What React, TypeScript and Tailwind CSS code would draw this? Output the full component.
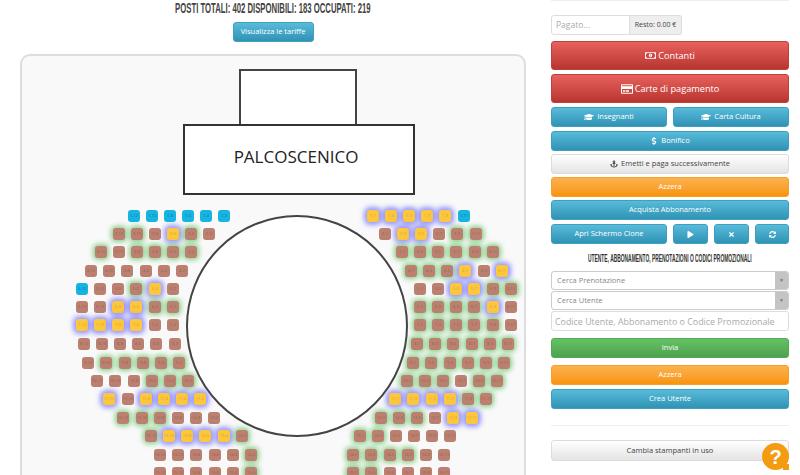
import React from "react";
import {
  FaAnchor,
  FaDollarSign,
  FaGraduationCap,
  FaPlay,
  FaRegCreditCard,
  FaRegMoneyBillAlt,
  FaSyncAlt,
  FaTimes,
} from "react-icons/fa";

// g = green glow, y = taken (yellow), p = plain, b = blue
type Row = { row: number; y: number; xs: number[]; kinds: string };

const leftRows: Row[] = [
  { row: 1, y: 216, xs: [134, 152, 170, 188, 206, 224], kinds: "bbbbbb" },
  { row: 2, y: 234, xs: [119, 137, 155, 173, 191, 209], kinds: "ggpygp" },
  { row: 3, y: 252, xs: [101, 119, 137, 155, 173, 191], kinds: "gpgggg" },
  { row: 4, y: 271, xs: [91, 109, 127, 146, 164, 182], kinds: "pppppp" },
  { row: 5, y: 289, xs: [82, 100, 118, 136, 155, 173], kinds: "bppgyp" },
  { row: 6, y: 307, xs: [82, 100, 118, 136, 155, 173], kinds: "ppyygg" },
  { row: 7, y: 325, xs: [82, 100, 118, 136, 155, 173], kinds: "yyyypp" },
  { row: 8, y: 344, xs: [84, 102, 120, 138, 156, 175], kinds: "pppppp" },
  { row: 9, y: 363, xs: [88, 106, 125, 143, 161, 179], kinds: "pggggg" },
  { row: 10, y: 381, xs: [97, 115, 134, 152, 170, 188], kinds: "pppggg" },
  { row: 11, y: 399, xs: [109, 128, 146, 164, 182, 200], kinds: "ypyyyy" },
  { row: 12, y: 418, xs: [123, 142, 160, 178, 196, 214], kinds: "gggppp" },
  { row: 13, y: 436, xs: [151, 169, 187, 205, 224, 242], kinds: "gyyyyg" },
  { row: 14, y: 455, xs: [160, 178, 196, 215, 233, 251], kinds: "pppppg" },
  { row: 15, y: 473, xs: [160, 178, 196, 215, 233, 251], kinds: "pppppg" },
];

const rightRows: Row[] = [
  { row: 1, y: 216, xs: [373, 391, 409, 427, 445, 464], kinds: "yyyyyb" },
  { row: 2, y: 234, xs: [385, 403, 421, 439, 457, 476], kinds: "pyypgg" },
  { row: 3, y: 252, xs: [402, 420, 438, 456, 475, 493], kinds: "gggggg" },
  { row: 4, y: 271, xs: [411, 429, 447, 465, 484, 502], kinds: "gggypy" },
  { row: 5, y: 289, xs: [420, 438, 456, 474, 493, 511], kinds: "ppyygg" },
  { row: 6, y: 307, xs: [420, 438, 456, 474, 493, 511], kinds: "ggggyp" },
  { row: 7, y: 325, xs: [420, 438, 456, 474, 493, 511], kinds: "gggggp" },
  { row: 8, y: 344, xs: [417, 435, 453, 472, 490, 508], kinds: "gggggg" },
  { row: 9, y: 363, xs: [413, 431, 450, 468, 486, 504], kinds: "gggggg" },
  { row: 10, y: 381, xs: [407, 425, 443, 461, 479, 497], kinds: "gggpgg" },
  { row: 11, y: 399, xs: [395, 413, 432, 450, 468, 486], kinds: "yyyygg" },
  { row: 12, y: 418, xs: [381, 399, 417, 435, 453, 472], kinds: "gggpyy" },
  { row: 13, y: 436, xs: [360, 378, 396, 414, 432, 450], kinds: "ggpppp" },
  { row: 14, y: 455, xs: [353, 371, 390, 408, 426, 444], kinds: "ggggpp" },
  { row: 15, y: 473, xs: [353, 371, 390, 408, 426, 444], kinds: "ggpppp" },
];

const seatClass: Record<string, string> = {
  p: "bg-[#bb8070] text-[#94604f]",
  g: "bg-[#bb8070] text-[#94604f] shadow-[0_0_5px_2px_rgba(90,190,90,0.7)]",
  y: "bg-[#fcc73d] text-[#d9a02c] shadow-[0_0_5px_3px_rgba(100,100,255,0.65)]",
  b: "bg-[#17b4e2] text-[#0d6f92]",
};

function Seat({ x, y, kind, label }: { x: number; y: number; kind: string; label: string }) {
  return (
    <div
      className={`absolute flex h-[12px] w-[12px] items-center justify-center rounded-[3px] text-[4px] leading-none ${seatClass[kind]}`}
      style={{ left: x - 6 - 22, top: y - 6 - 56 }}
    >
      {label}
    </div>
  );
}

const blue = "from-[#58bbda] to-[#2f93b5] text-white border-[#3f9fbf]";
const red = "from-[#e9615d] to-[#b8352f] text-white border-[#c0403b]";
const orange = "from-[#fbb24c] to-[#f89406] text-white border-[#f6a02a]";
const green = "from-[#64c364] to-[#4fa14f] text-white border-[#55a855]";
const light = "from-white to-[#e4e4e4] text-[#444] border-[#dcdcdc]";

function Btn({
  color,
  className = "h-5 text-[7.5px]",
  children,
}: {
  color: string;
  className?: string;
  children: React.ReactNode;
}) {
  return (
    <button
      className={`flex shrink-0 items-center justify-center gap-[3px] rounded-[3px] border bg-linear-to-b leading-none ${color} ${className}`}
    >
      {children}
    </button>
  );
}

function SelectBox({ text }: { text: string }) {
  return (
    <div className="flex h-[19px] overflow-hidden rounded-[3px] border border-[#ccc] bg-white">
      <span className="flex-1 pl-[5px] text-[7.5px] leading-[17px] text-[#888]">{text}</span>
      <span className="flex w-[13px] items-center justify-center bg-[#c4c4c4] text-[5px] text-[#777]">▼</span>
    </div>
  );
}

export default function App() {
  return (
    <div className="relative flex h-[475px] w-[800px] overflow-hidden bg-white font-['Open_Sans',sans-serif]">
      {/* sala */}
      <div className="ml-5 flex w-[506px] flex-col items-center">
        <div className="mt-[1px] flex h-[15px] w-full shrink-0 justify-center">
          <span className="w-max shrink-0 scale-x-[0.553] whitespace-nowrap font-['Liberation_Sans',sans-serif] text-[14px] leading-[15px] font-bold text-[#444]">
            POSTI TOTALI: 402 DISPONIBILI: 183 OCCUPATI: 219
          </span>
        </div>
        <Btn color={blue} className="mt-[6px] h-5 w-[81px] text-[7.5px]">
          Visualizza le tariffe
        </Btn>
        <div className="relative mt-3 h-[440px] w-full shrink-0 rounded-[10px] border-2 border-[#ddd] bg-[#f9f9f9]">
          <div className="absolute top-[13px] left-[217px] h-[57px] w-[118px] border-2 border-[#444] bg-white" />
          <div className="absolute top-[68px] left-[161px] flex h-[71px] w-[232px] items-center justify-center border-2 border-[#333] bg-white pr-[6px] pb-[6px] text-[17px] text-[#222]">
            PALCOSCENICO
          </div>
          <div className="absolute top-[159px] left-[164px] h-[222px] w-[222px] rounded-full border-2 border-[#444] bg-white" />
          {leftRows.map((r) =>
            r.xs.map((x, i) => (
              <Seat key={`l${r.row}-${i}`} x={x} y={r.y} kind={r.kinds[i]} label={`${r.row}-${12 - i * 2}`} />
            )),
          )}
          {rightRows.map((r) =>
            r.xs.map((x, i) => (
              <Seat key={`r${r.row}-${i}`} x={x} y={r.y} kind={r.kinds[i]} label={`${r.row}-${i * 2 + 1}`} />
            )),
          )}
        </div>
      </div>

      {/* cassa */}
      <div className="ml-[25px] flex w-[238px] shrink-0 flex-col">
        <div className="flex h-[15px] items-start">
          <div className="h-[1px] w-[56px] border-r border-b border-[#eee]" />
          <div className="h-[1px] w-[42px] border-r border-b border-[#eee]" />
          <div className="h-[1px] w-[51px] border-r border-b border-[#eee]" />
          <div className="h-[1px] w-[48px] border-r border-b border-[#eee]" />
          <div className="h-[1px] flex-1 border-b border-[#eee]" />
        </div>
        <div className="flex h-5 w-[131px]">
          <input
            placeholder="Pagato..."
            className="w-[79px] rounded-l-[3px] border border-[#ddd] px-1 text-[8.5px] outline-none placeholder:text-[#aaa]"
          />
          <span className="flex flex-1 items-center justify-center rounded-r-[3px] border border-l-0 border-[#ddd] bg-[#eee] text-[7px] text-[#444]">
            Resto: 0.00 €
          </span>
        </div>
        <div className="mt-[6px] flex flex-col gap-1">
          <Btn color={red} className="h-[29px] gap-[2px]! text-[9.2px]">
            <FaRegMoneyBillAlt className="text-[11px]" /> Contanti
          </Btn>
          <Btn color={red} className="h-[29px] gap-[2px]! text-[9.2px]">
            <FaRegCreditCard className="text-[12px]" /> Carte di pagamento
          </Btn>
        </div>
        <div className="mt-1 flex gap-[6px]">
          <Btn color={blue} className="h-5 flex-1 text-[7.5px]">
            <FaGraduationCap className="text-[10px]" /> Insegnanti
          </Btn>
          <Btn color={blue} className="h-5 flex-1 text-[7.5px]">
            <FaGraduationCap className="text-[10px]" /> Carta Cultura
          </Btn>
        </div>
        <div className="mt-1 flex flex-col gap-[3px]">
          <Btn color={blue}>
            <FaDollarSign className="text-[8px]" /> Bonifico
          </Btn>
          <Btn color={light}>
            <FaAnchor className="text-[8px]" /> Emetti e paga successivamente
          </Btn>
          <Btn color={orange}>Azzera</Btn>
          <Btn color={blue}>Acquista Abbonamento</Btn>
        </div>
        <div className="mt-1 flex gap-[6px]">
          <Btn color={blue} className="h-5 w-[116px] text-[7.5px]">
            Apri Schermo Clone
          </Btn>
          <Btn color={blue} className="h-5 w-[35px]">
            <FaPlay className="text-[7px]" />
          </Btn>
          <Btn color={blue} className="h-5 w-[35px]">
            <FaTimes className="text-[7px]" />
          </Btn>
          <Btn color={blue} className="h-5 w-[34px]">
            <FaSyncAlt className="text-[7px]" />
          </Btn>
        </div>
        <div className="mt-[8px] flex h-[19px] shrink-0 justify-center">
          <span className="w-max shrink-0 scale-x-[0.445] whitespace-nowrap font-['Liberation_Sans',sans-serif] text-[11px] leading-[13px] font-bold text-[#333]">
            UTENTE, ABBONAMENTO, PRENOTAZIONI O CODICI PROMOZIONALI
          </span>
        </div>
        <div className="flex flex-col gap-[1px]">
          <SelectBox text="Cerca Prenotazione" />
          <SelectBox text="Cerca Utente" />
          <input
            placeholder="Codice Utente, Abbonamento o Codice Promozionale"
            className="h-5 rounded-[3px] border border-[#ddd] px-[3px] text-[8.9px] outline-none placeholder:text-[#aaa]"
          />
        </div>
        <Btn color={green} className="mt-[7px] h-5 text-[7.5px]">
          Invia
        </Btn>
        <Btn color={orange} className="mt-[7px] h-5 text-[7.5px]">
          Azzera
        </Btn>
        <Btn color={blue} className="mt-1 h-5 text-[7.5px]">
          Crea Utente
        </Btn>
        <div className="mt-4 border-t border-[#eee]" />
        <Btn color={light} className="mt-[14px] h-[21px] text-[7.5px]">
          Cambia stampanti in uso
        </Btn>
      </div>

      {/* aiuto */}
      <div className="absolute top-[443px] left-[762px] flex h-[27px] w-[27px] items-center justify-center rounded-full bg-[#f39c12] font-['Liberation_Sans',sans-serif] text-[20px] font-bold text-white">
        ?
        <span className="absolute right-0 bottom-0 h-[6px] w-[6px] bg-[#f39c12]" />
      </div>
    </div>
  );
}
